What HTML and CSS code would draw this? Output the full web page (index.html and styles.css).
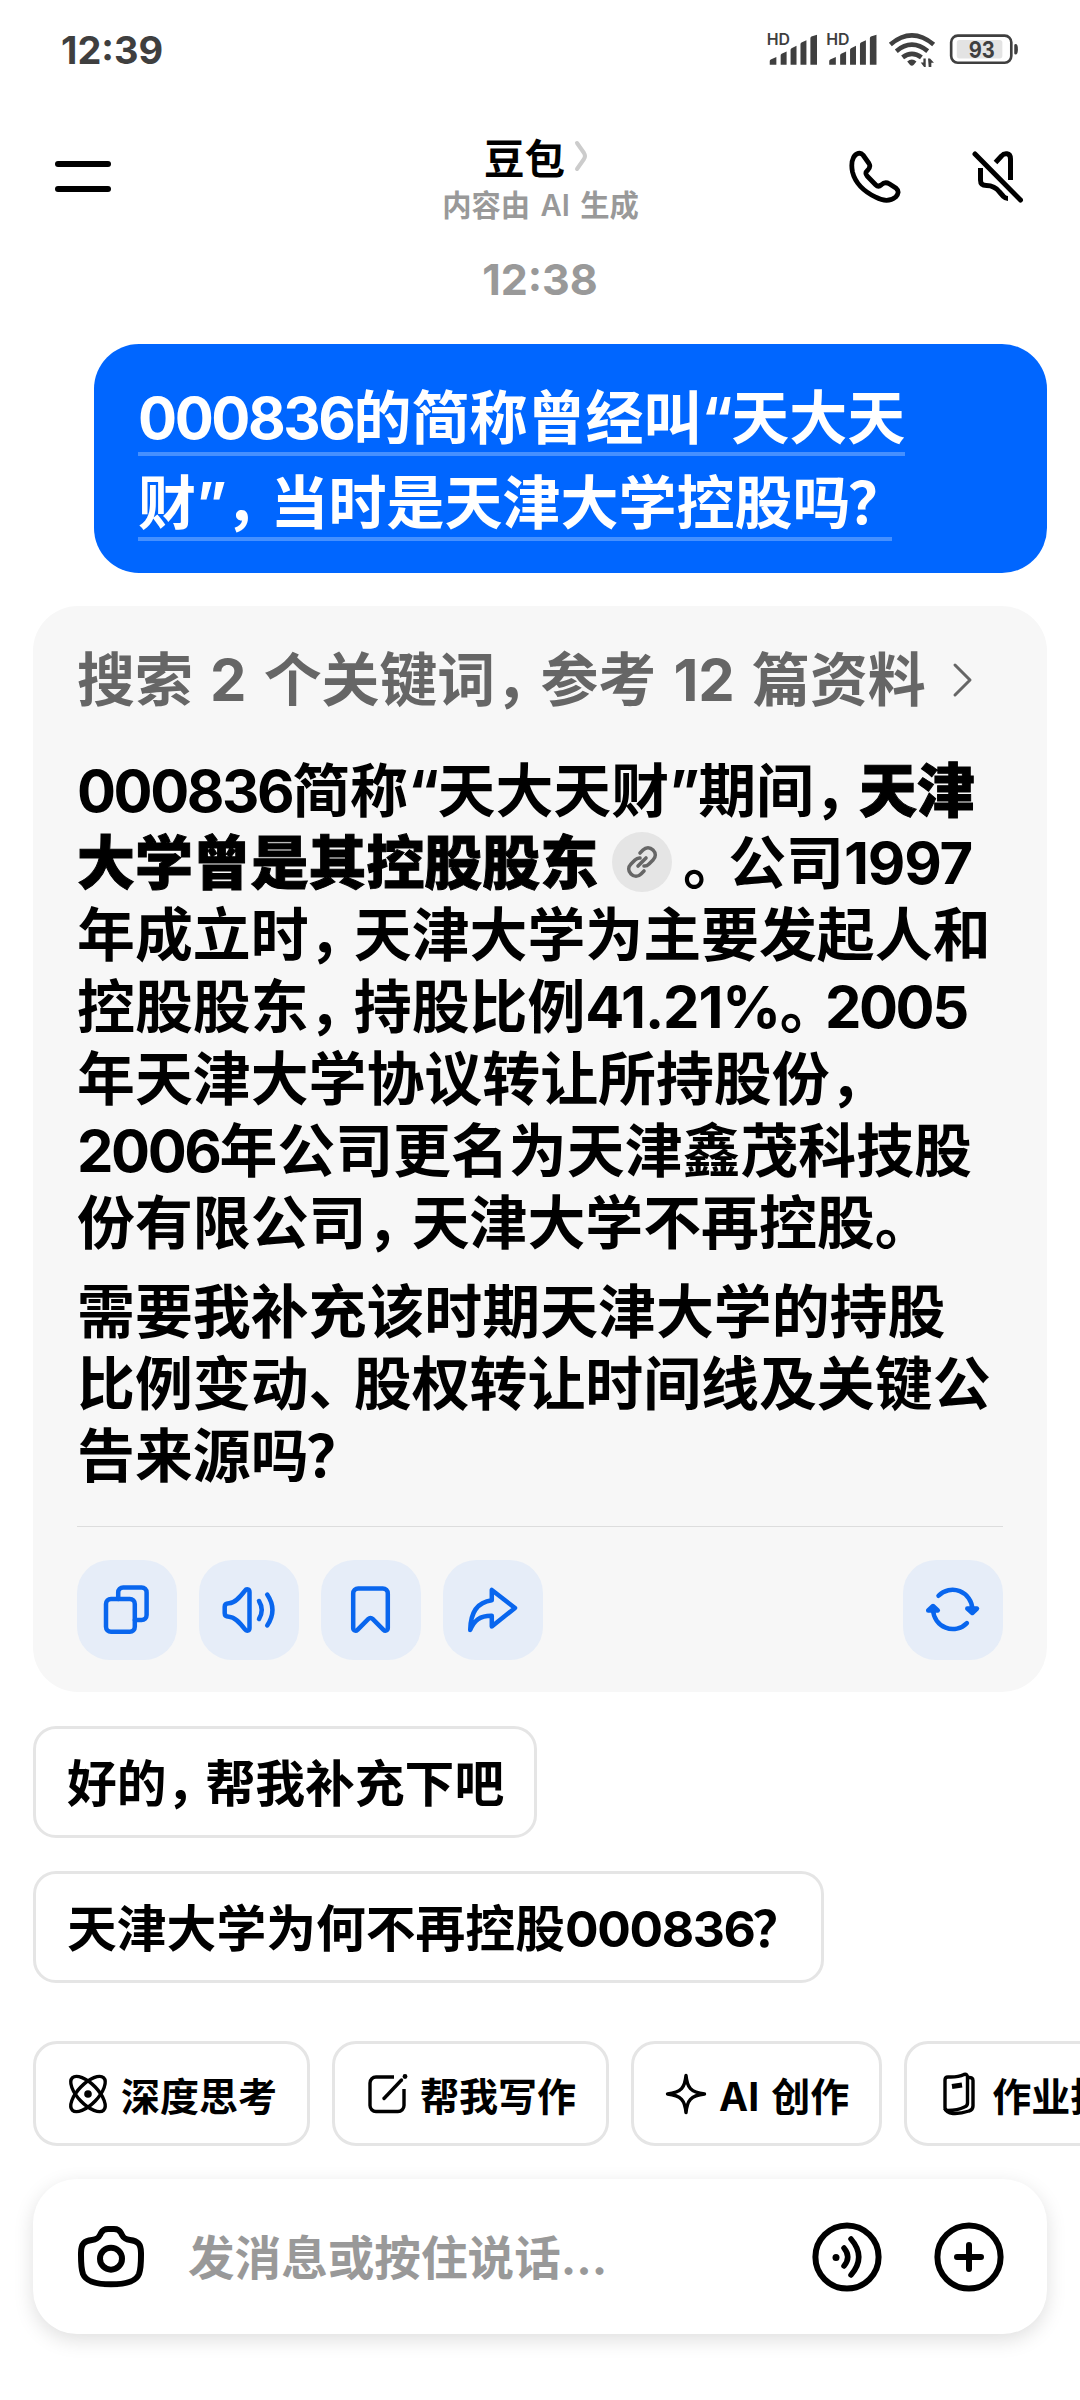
FILE: index.html
```html
<!DOCTYPE html>
<html lang="zh-CN">

<head>
    <meta charset="UTF-8">
    <title>豆包</title>
    <link rel="stylesheet" href="styles.css">
</head>

<body>

    <div class="status-bar">
        <span class="clock">12:39</span>
        <svg class="status-icons" viewBox="80 65 765 115" fill="#3f3f3f">
            <text class="hd" x="79" y="108">HD</text>
            <path d="M88 167v-11q0-3 3-5l17-7v23zM121 167v-28q0-3 3-5l15-7v40zM151 167v-45q0-3 3-5l15-7v57zM181 167v-62q0-3 3-5l15-7v74zM211 167v-80q0-3 3-5l17-6v91z" />
            <text class="hd" x="259" y="108">HD</text>
            <path d="M268 167v-11q0-3 3-5l17-7v23zM301 167v-28q0-3 3-5l15-7v40zM331 167v-45q0-3 3-5l15-7v57zM361 167v-62q0-3 3-5l15-7v74zM391 167v-80q0-3 3-5l17-6v91z" />
            <g fill="none" stroke="#3f3f3f" stroke-width="14">
                <path d="M453 106q65-55 131 0" />
                <path d="M471 126q47-39 95 0" />
                <path d="M490 145q28-22 57 0" />
            </g>
            <path d="M504 157q14-12 28 0l-8 10q-6 6-12 0z" />
            <path d="M545 160h8v-12h7v26h-5zM567 148h6l12 13h-8v13h-8z" />
            <rect x="637" y="79" width="182" height="82" rx="20" fill="none" stroke="#3f3f3f" stroke-width="8" />
            <rect x="654" y="92" width="138" height="56" rx="8" fill="#e3e3e3" />
            <path d="M828 108q0-4 4-4 7 0 7 16t-7 16q-4 0-4-4z" />
            <text class="level" x="690" y="146" textLength="79" lengthAdjust="spacingAndGlyphs">93</text>
        </svg>
    </div>

    <div class="header">
        <div class="menu"><i></i><i></i></div>
        <div class="title">
            <div class="name">豆包
                <svg width="16" height="32" viewBox="0 0 16 32" fill="none" stroke="#ccc" stroke-width="4" stroke-linecap="round"><path d="M3 3l7 10q2 3 0 6l-7 10" /></svg>
            </div>
            <div class="sub">内容由 AI 生成</div>
        </div>
        <div class="actions">
            <svg width="56" height="56" viewBox="0 0 56 56" fill="none" stroke="#000" stroke-width="4.8" stroke-linejoin="round">
                <path d="M7.5 9.5C10 5 14.500 4 17 7l6 8.500c2 3 .5 5-1.700 7.200-2 1.600-1.800 3.500-.2 5.300l8.500 8.700c2 2 3.600 2 5.600.2 2.500-2.500 5-3 8-1.200l7 4.600c3 2.500 2.200 6-.5 8.700-5.500 4.500-13 4-20 .2C17 43 9 34 6.500 24c-1-5-1.300-10 1-14.500z" />
            </svg>
            <svg width="56" height="56" viewBox="0 0 56 56" fill="none" stroke="#000" stroke-width="5" stroke-linejoin="round">
                <path d="M5 6l45.500 46" stroke-linecap="round" />
                <path d="M25.500 14.500l6-6.500c2.500-3 9-3.800 9 3v21" />
                <path d="M10.500 20v12c0 4 2 5.500 6 5.500 6 0 10 2.500 13 6.500l4 4.500q2 2 4.500 2" />
            </svg>
        </div>
    </div>

    <div class="time">12:38</div>

    <div class="chat">
        <div class="bubble">
            <div><span class="mark"><span class="num">000836</span>的简称曾经叫<span class="qt">“</span>天大天</span></div>
            <div><span class="mark">财<span class="qt">”</span><span class="pt">，</span>当时是天津大学控股吗<span class="ask">？</span></span></div>
        </div>

        <div class="card">
            <div class="search">
                <span>搜索 2 个关键词<span class="pt">，</span>参考 12 篇资料</span>
                <svg width="22" height="36" viewBox="0 0 22 36" fill="none" stroke="#666" stroke-width="3" stroke-linecap="round" stroke-linejoin="round"><path d="M3 3l15 15L3 33" /></svg>
            </div>

            <p>
                <span class="line"><span class="num">000836</span>简称<span class="qt">“</span>天大天财<span class="qt">”</span>期间<span class="pt">，</span><b>天津</b></span>
                <span class="line"><b>大学曾是其控股股东</b><span class="link"><svg width="36" height="36" viewBox="0 0 36 36" fill="none" stroke="#666" stroke-width="3.600" stroke-linecap="round"><path d="M14 22l8-8M16 9l3-3c3-3 7-3 10 0s3 7 0 10l-4 4c-1.500 1.500-3 2.200-5 2M20 27l-3 3c-3 3-7 3-10 0s-3-7 0-10l4-4c1.500-1.500 3-2.200 5-2" /></svg></span><span class="pt">。</span>公司<span class="num wide">1997</span></span>
                <span class="line">年成立时<span class="pt">，</span>天津大学为主要发起人和</span>
                <span class="line">控股股东<span class="pt">，</span>持股比例<span class="num wide">41.21%</span><span class="pt">。</span><span class="num">2005</span></span>
                <span class="line">年天津大学协议转让所持股份<span class="pt">，</span></span>
                <span class="line"><span class="num">2006</span>年公司更名为天津鑫茂科技股</span>
                <span class="line">份有限公司<span class="pt">，</span>天津大学不再控股<span class="pt">。</span></span>
            </p>
            <p>
                <span class="line">需要我补充该时期天津大学的持股</span>
                <span class="line">比例变动<span class="pt">、</span>股权转让时间线及关键公</span>
                <span class="line">告来源吗<span class="ask">？</span></span>
            </p>

            <div class="toolbar">
                <div class="btn">
                    <svg viewBox="0 0 100 100">
                        <rect x="29" y="39" width="28.800" height="32.800" rx="5" />
                        <path d="M41.200 39v-6.500a5 5 0 0 1 5-5h18.400a5 5 0 0 1 5 5V55a5 5 0 0 1-5 5h-6.800" />
                    </svg>
                </div>
                <div class="btn">
                    <svg viewBox="0 0 100 100">
                        <path d="M50.500 32c0-3-3-3.500-4.700-1.200C41 37 36 43 30 43.300c-3 .1-4.300 1.200-4.300 3.500v6.400c0 2.300 1.300 3.400 4.300 3.500 6 .3 11 6.300 15.800 12.500 1.700 2.300 4.700 1.800 4.700-1.200z" />
                        <path d="M60 41q5.500 9 0 18M68.200 34.500q10.500 15.500 0 31" />
                    </svg>
                </div>
                <div class="btn">
                    <svg viewBox="0 0 100 100">
                        <path d="M32.200 33.500a5 5 0 0 1 5-5h24.600a5 5 0 0 1 5 5V68c0 2.500-2.500 3.500-4.300 1.800L51.600 58.800a3 3 0 0 0-4.200 0L36.500 69.800c-1.800 1.700-4.300.7-4.300-1.800z" />
                    </svg>
                </div>
                <div class="btn">
                    <svg viewBox="0 0 100 100">
                        <path d="M48.800 30v10.200C35 42 27.500 52 27.200 70c4-10 10-14.500 21.600-14.300v10.800L72 48z" />
                    </svg>
                </div>
                <div class="btn refresh">
                    <svg viewBox="0 0 100 100">
                        <path d="M35.500 35.800A19.700 19.700 0 0 1 69.300 49M63.900 63.100A19.700 19.700 0 0 1 30.100 50" />
                        <path class="tip" d="M64.300 48.500l5 4.500 4.700-4.500zM25.200 50.500l4.800-4.500 4.800 4.500z" />
                    </svg>
                </div>
            </div>
        </div>

        <div class="suggest first">好的<span class="pt">，</span>帮我补充下吧</div>
        <div class="suggest">天津大学为何不再控股<span class="num">000836</span><span class="ask">？</span></div>
    </div>

    <div class="tools">
        <div class="tool">
            <svg viewBox="0 0 44 44">
                <ellipse cx="22" cy="22" rx="22.500" ry="10" transform="rotate(46 22 22)" />
                <ellipse cx="22" cy="22" rx="22.500" ry="10" transform="rotate(-46 22 22)" />
                <circle cx="22" cy="22" r="3.800" fill="#000" stroke="none" />
            </svg>
            <span>深度思考</span>
        </div>
        <div class="tool">
            <svg viewBox="0 0 44 44">
                <path d="M29 5H11a6 6 0 0 0-6 6v22.500a6 6 0 0 0 6 6h22a6 6 0 0 0 6-6V17" />
                <path d="M19 26.500L36.500 8" stroke-linecap="round" />
                <circle cx="40" cy="4.500" r="2.400" fill="#000" stroke="none" />
            </svg>
            <span>帮我写作</span>
        </div>
        <div class="tool">
            <svg viewBox="0 0 44 44">
                <path d="M22 3.500c1.200 12 4.500 17 18.500 18.500C26.500 23.500 23.200 28.500 22 40.500 20.800 28.500 17.500 23.500 3.500 22 17.500 20.500 20.800 15.500 22 3.500z" />
            </svg>
            <span class="ai">AI 创作</span>
        </div>
        <div class="tool">
            <svg viewBox="0 0 44 44">
                <path d="M8 8q0-3 3-3 10 .5 16-2.500 3.500-1 3.500 3V31q0 3-3 4-7 3.500-16.500 3.500-3 0-3-3z" />
                <path d="M31 5.500q5-.5 5 3V34q0 4-4 5-9 3-16 2.500-7-1-8-5" />
                <path d="M15 14.500l10-1.500" stroke-width="5" />
            </svg>
            <span>作业批改</span>
        </div>
    </div>

    <div class="input-bar">
        <svg width="74" height="72" viewBox="0 0 74 72" fill="none" stroke="#000" stroke-width="6" stroke-linejoin="round">
            <path d="M27 12c1.500-3 3.500-4 7-4h6c3.500 0 5.500 1 7 4l1 2c1.800 3.500 3.500 4.500 8 5C64 20 67 23 67 32c0 9 .2 15-2 21-3 7.500-13 10.300-28 10.300S12 60.500 9 53c-2.200-6-2-12-2-21 0-9 3-12 11-13 4.500-.5 6.200-1.500 8-5z" />
            <circle cx="37" cy="37.700" r="11" />
        </svg>
        <span class="placeholder">发消息或按住说话...</span>
        <svg width="72" height="72" viewBox="-36 -36 72 72" fill="none" stroke="#000" stroke-width="6" stroke-linecap="round">
            <circle r="31.600" />
            <circle cx="-11" cy=".5" r="3.500" fill="#000" stroke="none" />
            <path d="M-3-9q7.500 9 0 18M4-18q15.500 18 0 36" stroke-width="5.500" />
        </svg>
        <svg width="72" height="72" viewBox="-36 -36 72 72" fill="none" stroke="#000" stroke-width="6" stroke-linecap="round">
            <circle r="31.600" />
            <path d="M-12 0h24M0-12v24" />
        </svg>
    </div>

</body>

</html>
```

FILE: styles.css
```css
* {
    box-sizing: border-box;
    margin: 0;
    padding: 0;
}

body {
    width: 1080px;
    height: 2400px;
    overflow: hidden;
    background: #fff;
    color: #000;
    font-family: Inter, "Noto Sans CJK SC", sans-serif;
    font-weight: 700;
    white-space: nowrap;
}

svg {
    display: block;
    flex: none;
}

/* Status bar */
.status-bar {
    display: flex;
    justify-content: space-between;
    align-items: center;
    height: 100px;
    padding: 0 59px 0 61px;
}

.clock {
    font-size: 38px;
    color: #3f3f3f;
}

.status-icons {
    width: 255px;
    height: 38px;
}

.hd {
    font-size: 48px;
    font-weight: 600;
}

.level {
    font-size: 68px;
}

/* Header */
.header {
    display: grid;
    grid-template-columns: 1fr auto 1fr;
    align-items: center;
    height: 152px;
    padding: 0 54px 0 55px;
}

.menu {
    display: flex;
    flex-direction: column;
    gap: 19px;
}

.menu i {
    width: 56px;
    height: 6px;
    border-radius: 3px;
    background: #000;
}

.title {
    padding-top: 6px;
    text-align: center;
}

.name {
    display: flex;
    justify-content: center;
    align-items: center;
    gap: 9px;
    height: 52px;
    margin-right: 7px;
    font-size: 40.5px;
}

.sub {
    height: 46px;
    font-size: 29.3px;
    font-weight: 600;
    line-height: 47px;
    color: #999;
    word-spacing: 3px;
}

.actions {
    display: flex;
    justify-content: flex-end;
    gap: 68px;
}

.time {
    height: 92px;
    font-size: 43px;
    line-height: 54px;
    text-align: center;
    color: #999;
}

/* Chat */
.chat {
    display: flex;
    flex-direction: column;
    align-items: flex-start;
    gap: 33px;
    padding: 0 33px;
}

.num {
    letter-spacing: -0.042em;
}

.num.wide {
    letter-spacing: -0.02em;
}

.pt {
    letter-spacing: -0.22em;
}

.qt {
    letter-spacing: -0.03em;
}

.ask {
    margin-left: -0.04em;
    letter-spacing: -0.24em;
}

.bubble {
    align-self: flex-end;
    width: 953px;
    height: 229px;
    padding: 32px 44px;
    border-radius: 45px;
    background: #0066ff;
    color: #fff;
    font-size: 58px;
    line-height: 85px;
}

.mark {
    display: inline-block;
    height: 80px;
    border-bottom: 4px solid #4590ff;
    vertical-align: top;
}

.card {
    width: 1014px;
    height: 1086px;
    padding: 38px 44px 0;
    border-radius: 45px;
    background: #f7f7f7;
    font-size: 57.9px;
    line-height: 72px;
}

.search {
    display: flex;
    align-items: center;
    gap: 26px;
    margin-bottom: 39px;
    color: #666;
    word-spacing: 3.5px;
}

.card p {
    margin-bottom: 17px;
}

.line {
    display: block;
    height: 72px;
}

.card b {
    font-weight: 900;
    -webkit-text-stroke: 1px #000;
}

.link {
    display: inline-flex;
    justify-content: center;
    align-items: center;
    width: 60px;
    height: 60px;
    margin: 5px 11px 0 14px;
    border-radius: 50%;
    background: #e5e5e5;
    vertical-align: top;
}

.toolbar {
    display: flex;
    gap: 22px;
    padding-top: 33px;
    border-top: 1px solid #ddd;
    margin-top: 34px;
}

.btn {
    width: 100px;
    height: 100px;
    border-radius: 33px;
    background: #e6edf8;
}

.btn svg {
    fill: none;
    stroke: #0966ee;
    stroke-width: 4.5;
    stroke-linecap: round;
    stroke-linejoin: round;
}

.btn .tip {
    fill: #0966ee;
}

.refresh {
    margin-left: auto;
}

.suggest {
    height: 112px;
    padding: 1px 31px 0;
    border: 3px solid #e5e5e5;
    border-radius: 23px;
    font-size: 49.8px;
    line-height: 109px;
}

.suggest.first {
    margin-top: 1px;
    padding-right: 30px;
}

.suggest .num {
    letter-spacing: -0.027em;
}

/* Shortcut row */
.tools {
    display: flex;
    gap: 22px;
    padding: 58px 0 33px 33px;
    overflow: hidden;
}

.tool {
    display: flex;
    align-items: center;
    flex: none;
    gap: 11px;
    height: 105px;
    padding: 0 30px;
    border: 3px solid #e5e5e5;
    border-radius: 24px;
    font-size: 39px;
}

.tool svg {
    width: 44px;
    height: 44px;
    fill: none;
    stroke: #000;
    stroke-width: 3.4;
    stroke-linejoin: round;
}

.ai {
    word-spacing: 3px;
}

/* Input */
.input-bar {
    display: flex;
    align-items: center;
    gap: 50px;
    width: 1014px;
    height: 155px;
    margin-left: 33px;
    padding: 0 42px 0 41px;
    border-radius: 44px;
    background: #fff;
    box-shadow: 0 6px 20px rgba(0, 0, 0, 0.13);
}

.placeholder {
    flex: 1;
    margin: -5px 0 0 -10px;
    font-size: 46.6px;
    color: #999;
}
```
